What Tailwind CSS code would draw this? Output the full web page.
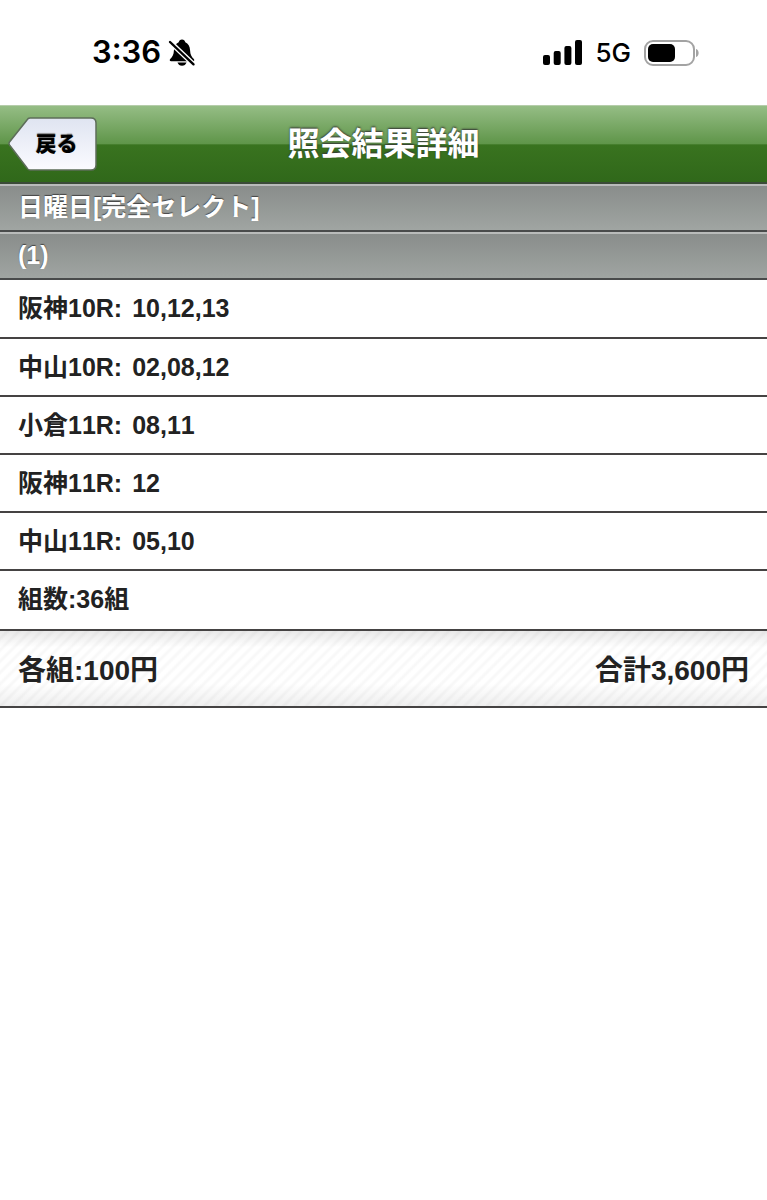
<!DOCTYPE html>
<html lang="ja">
<head>
    <meta charset="UTF-8" />
    <meta name="viewport" content="width=device-width, initial-scale=1.0" />
    <title>照会結果詳細</title>
    <script src="https://cdn.jsdelivr.net/npm/@tailwindcss/browser@4"></script>
</head>
<body class="min-h-screen bg-white font-['Liberation_Sans','Noto_Sans_CJK_JP',sans-serif] font-bold text-[#222222] [font-kerning:none]">

    <!-- Status bar -->
    <div class="flex h-[105px] items-center justify-between pr-[68px] pl-[92px] font-['Inter',sans-serif] text-black">
        <div class="flex items-center gap-[7px]">
            <span class="text-[31px] font-semibold">3:36</span>
            <svg class="h-7 w-7" viewBox="0 0 28 28" aria-label="消音">
                <path d="M2.200 20c2.500-2.500 3.500-4.500 3.700-8.500C6.100 7.500 7.800 4.300 10.700 3.300 11 1.500 12.200.4 14 .4s3 1.100 3.300 2.900c2.900 1 4.600 4.200 4.800 8.200.2 4 1.200 6 3.700 8.500.9 1 .5 2.300-.9 2.300H3.100C1.700 22.300 1.300 21 2.200 20z" />
                <path d="M9.500 23.500h9c-.7 2-2.300 3.300-4.500 3.300s-3.800-1.300-4.500-3.300z" />
                <path d="M0 1 27 26.700" stroke="#fff" stroke-width="5" />
                <path d="M2 3 25.500 25.300" stroke="#000" stroke-width="2.400" stroke-linecap="round" />
            </svg>
        </div>
        <div class="flex items-center gap-[13px]">
            <svg class="h-[25px] w-[39px]" viewBox="0 0 39 25" aria-label="電波">
                <rect x="0" y="15" width="7" height="10" rx="2" />
                <rect x="10.700" y="11" width="7" height="14" rx="2" />
                <rect x="21.400" y="6" width="7" height="19" rx="2" />
                <rect x="32" y="0" width="7" height="25" rx="2" />
            </svg>
            <span class="text-[26px] font-medium">5G</span>
            <svg class="h-[26px] w-[55px]" viewBox="0 0 55 26" aria-label="電池">
                <rect x="1" y="1" width="49" height="24" rx="8" fill="none" stroke="#a3a3a3" stroke-width="2" />
                <rect x="4" y="4" width="27" height="18" rx="5" />
                <path d="M52 9c3.500 1 3.500 7 0 8z" fill="#a3a3a3" />
            </svg>
        </div>
    </div>

    <!-- Title bar -->
    <header class="grid h-[79px] grid-cols-[1fr_auto_1fr] items-center border-t border-b-2 border-t-[#b5cdaa] border-b-[#3b4b38] bg-[linear-gradient(to_bottom,#95bd85_0%,#5f9549_50%,#39731f_51%,#30681a_100%)] px-2">
        <button type="button" class="relative flex h-[54px] w-[89px] items-center justify-center pl-2 text-[21px] font-black text-black [text-shadow:0_-1px_1px_#777777]">
            <svg class="absolute inset-0 h-full w-full" viewBox="0 0 89 54" aria-hidden="true">
                <defs>
                    <linearGradient id="back" x1="0" y1="0" x2="0" y2="1">
                        <stop offset="0" stop-color="#dfe4f1" />
                        <stop offset="1" stop-color="#fbfbff" />
                    </linearGradient>
                </defs>
                <path d="M22 1h61q5 0 5 5v42q0 5-5 5H22q-2 0-3-2L1.500 28q-1-1.500 0-3L19 3q1-2 3-2z" fill="url(#back)" stroke="#5d6d5a" stroke-width="1.500" />
            </svg>
            <span class="relative">戻る</span>
        </button>
        <h1 class="text-[32px] leading-10 text-white [text-shadow:0_-1px_2px_#333333]">照会結果詳細</h1>
    </header>

    <main>
        <h2 class="flex h-12 items-center border-t-2 border-b-2 border-t-[#b9bbba] border-b-[#494b4b] bg-linear-to-b from-[#898d8b] to-[#a0a5a2] px-[18px] text-[25px] text-white [text-shadow:0_-1px_1px_#444444]">日曜日[完全セレクト]</h2>
        <h3 class="flex h-12 items-center border-t-2 border-b-2 border-t-[#b9bbba] border-b-[#494b4b] bg-linear-to-b from-[#898d8b] to-[#a0a5a2] px-[18px] text-[25px] text-white [text-shadow:0_-1px_1px_#444444]">(1)</h3>

        <ul class="text-[25px]">
            <li class="flex h-[59px] items-center gap-[10px] border-b-2 border-[#454343] px-[18px] pt-px"><span>阪神10R:</span><span>10,12,13</span></li>
            <li class="flex h-[58px] items-center gap-[10px] border-b-2 border-[#454343] px-[18px] pt-px"><span>中山10R:</span><span>02,08,12</span></li>
            <li class="flex h-[58px] items-center gap-[10px] border-b-2 border-[#454343] px-[18px] pt-px"><span>小倉11R:</span><span>08,11</span></li>
            <li class="flex h-[58px] items-center gap-[10px] border-b-2 border-[#454343] px-[18px] pt-px"><span>阪神11R:</span><span>12</span></li>
            <li class="flex h-[58px] items-center gap-[10px] border-b-2 border-[#454343] px-[18px] pt-px"><span>中山11R:</span><span>05,10</span></li>
            <li class="flex h-[60px] items-center border-b-2 border-[#454343] px-[18px]">組数:36組</li>
        </ul>

        <div class="flex h-[77px] items-center justify-between border-b-2 border-[#454343] bg-[linear-gradient(to_bottom,#00000016,#00000000_22%,#00000000_70%,#00000010),repeating-linear-gradient(135deg,#ffffff_0px,#ffffff_3px,#f8f8f8_5px,#f8f8f8_6px,#ffffff_8px)] px-[18px] pt-1 text-[28px]">
            <span>各組:100円</span>
            <span>合計3,600円</span>
        </div>
    </main>
</body>
</html>
